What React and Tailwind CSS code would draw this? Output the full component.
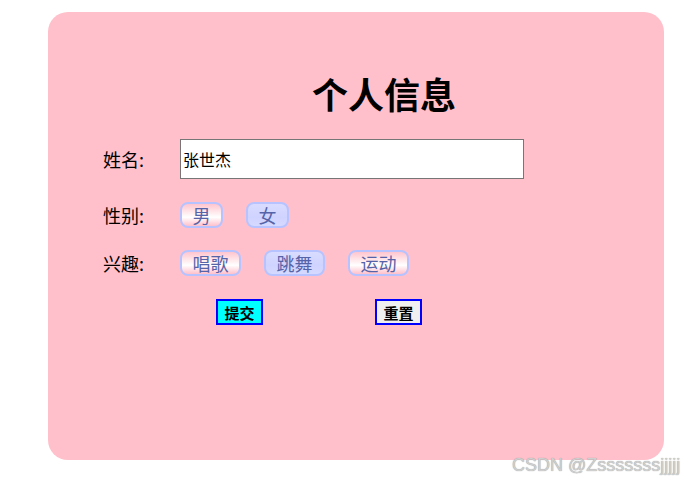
import React from "react";

const cjk = { fontFamily: '"Noto Sans CJK SC", "Noto Sans", sans-serif' };

function Chip({ children, selected }) {
  return (
    <span
      className={
        "flex h-[26px] items-center justify-center rounded-[8px] border-2 border-[#b7c3ff] px-[10.5px] text-[18px] leading-none text-[#5563a8] " +
        (selected
          ? "bg-[linear-gradient(180deg,#d9dcff_0%,#cfd3ff_60%,#d6d9ff_100%)]"
          : "bg-[linear-gradient(180deg,#ffc4ce_0%,#ffffff_60%,#ffc0cb_100%)]")
      }
    >
      {children}
    </span>
  );
}

export default function App() {
  return (
    <div className="relative h-[484px] w-[697px] bg-white" style={cjk}>
      <div className="ml-[48px] pt-[12px]">
        <div className="flex h-[448px] w-[616px] flex-col rounded-[20px] bg-[#ffc0cb]">
          <h1 className="mt-[61px] h-[40px] pl-[264px] text-[36px] font-bold leading-[40px] text-black">
            个人信息
          </h1>
          <div className="mt-[26px] flex h-[40px] items-center">
            <span className="w-[77px] pl-[55px] text-[18px] leading-none text-black box-content">
              姓名:
            </span>
            <div className="flex h-[40px] w-[344px] items-center border border-[#767676] bg-white pl-[2px] text-[16px] text-black">
              张世杰
            </div>
          </div>
          <div className="mt-[23px] flex h-[26px] items-center">
            <span className="w-[77px] pl-[55px] text-[18px] leading-none text-black box-content">
              性别:
            </span>
            <div className="flex gap-[23px]">
              <Chip>男</Chip>
              <Chip selected>女</Chip>
            </div>
          </div>
          <div className="mt-[22px] flex h-[26px] items-center">
            <span className="w-[77px] pl-[55px] text-[18px] leading-none text-black box-content">
              兴趣:
            </span>
            <div className="flex gap-[23px]">
              <Chip>唱歌</Chip>
              <Chip selected>跳舞</Chip>
              <Chip>运动</Chip>
            </div>
          </div>
          <div className="mt-[23px] flex h-[26px] items-center pl-[168px]">
            <button className="flex h-[26px] w-[47px] items-center justify-center border-2 border-[#0000ff] bg-[#00ffff] text-[15px] font-bold leading-none text-black">
              提交
            </button>
            <button className="ml-[112px] flex h-[26px] w-[47px] items-center justify-center border-2 border-[#0000ff] bg-[#f0f0f0] text-[15px] font-bold leading-none text-black">
              重置
            </button>
          </div>
        </div>
      </div>
      <div
        className="absolute left-[512px] top-[455px] text-[18px] leading-[20px] text-[#cfcfcf] [text-shadow:0_0_1px_#8a8a8a]"
        style={{ fontFamily: '"Liberation Sans", Arial, sans-serif' }}
      >
        CSDN @Zsssssssjjjjj
      </div>
    </div>
  );
}
